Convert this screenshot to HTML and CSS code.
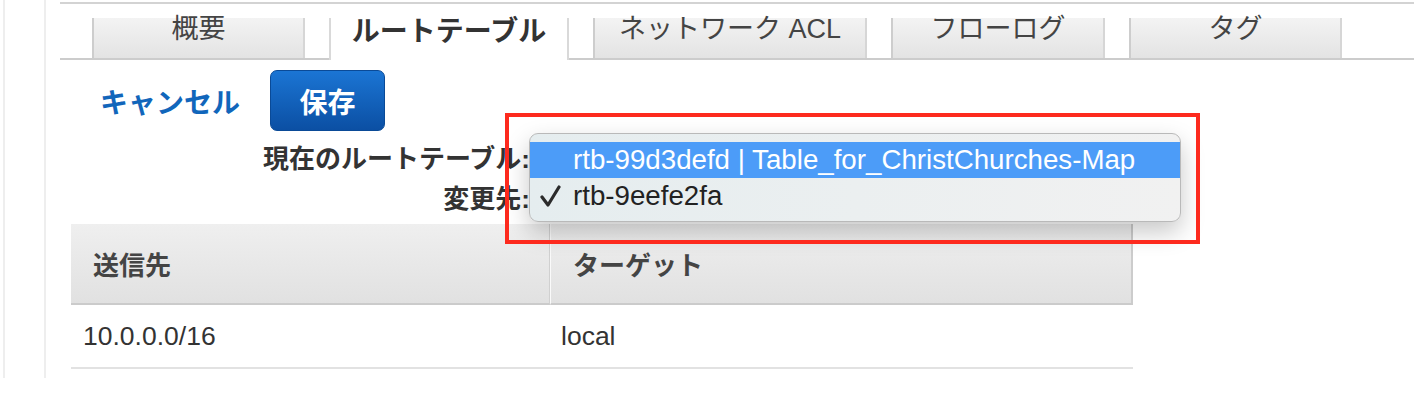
FILE: index.html
```html
<!DOCTYPE html>
<html lang="ja">
<head>
    <meta charset="UTF-8">
    <title>ルートテーブル</title>
    <link rel="stylesheet" href="styles.css">
</head>
<body>
    <div class="page">
        <div class="rail"></div>
        <div class="main">
            <div class="tabs">
                <div class="tab tab-1">概要</div>
                <div class="tab tab-2 active">ルートテーブル</div>
                <div class="tab tab-3">ネットワーク ACL</div>
                <div class="tab tab-4">フローログ</div>
                <div class="tab tab-5">タグ</div>
            </div>

            <div class="actions">
                <a class="link" href="#">キャンセル</a>
                <button class="btn-save">保存</button>
            </div>

            <div class="form">
                <div class="form-row"><label>現在のルートテーブル:</label></div>
                <div class="form-row"><label>変更先:</label></div>
            </div>

            <table class="routes">
                <thead>
                    <tr>
                        <th class="col-dest">送信先</th>
                        <th class="col-target">ターゲット</th>
                    </tr>
                </thead>
                <tbody>
                    <tr>
                        <td class="col-dest">10.0.0.0/16</td>
                        <td class="col-target">local</td>
                    </tr>
                </tbody>
            </table>

            <!-- open select menu -->
            <div class="menu">
                <div class="menu-item selected">rtb-99d3defd | Table_for_ChristChurches-Map</div>
                <div class="menu-item">
                    <svg class="check" width="22" height="24" viewBox="0 0 22 24">
                        <polyline points="2,13 8,21 19,3" fill="none" stroke="#2b2b2b" stroke-width="3.2" stroke-linecap="round" stroke-linejoin="round"/>
                    </svg>rtb-9eefe2fa
                </div>
            </div>

            <!-- annotation -->
            <div class="mark-box"></div>
        </div>
    </div>
</body>
</html>
```

FILE: styles.css
```css
body {
    margin: 0;
    font-family: 'Liberation Sans', 'Noto Sans CJK JP', sans-serif;
    background-color: #fff;
    color: #444;
}
.page {
    display: flex;
    height: 378px;
}
.rail {
    width: 39px;
    margin-left: 3px;
    border-left: 2px solid #eeeeee;
    border-right: 2px solid #eeeeee;
}
.main {
    flex: 1;
    position: relative;
    margin-left: 14px;
    margin-top: 2px;
    border-top: 2px solid #d3d3d3;
}

/* tabs */
.tabs {
    display: flex;
    gap: 24px;
    height: 40px;
    margin-top: 14px;
    padding-left: 32px;
    border-bottom: 2px solid #cccccc;
}
.tab {
    box-sizing: border-box;
    border-left: 2px solid #cdcdcd;
    border-right: 2px solid #d6d6d6;
    background: linear-gradient(#f3f3f3, #e3e3e3);
    text-align: center;
    font-size: 27px;
    line-height: 22px;
    color: #444;
}
.tab-1 { width: 213px; }
.tab-2 { width: 240px; }
.tab-3 { width: 274px; }
.tab-4 { width: 214px; }
.tab-5 { width: 213px; }
.tab.active {
    height: 42px;
    background: #fff;
    border-color: #d9d9d9;
    font-size: 28px;
    font-weight: bold;
    line-height: 28px;
    color: #333;
}

/* cancel / save */
.actions {
    display: flex;
    align-items: center;
    height: 61px;
    margin-top: 10px;
    padding-left: 40px;
}
.link {
    display: block;
    width: 170px;
    color: #1166bb;
    font-size: 28px;
    font-weight: bold;
    text-decoration: none;
}
.btn-save {
    width: 115px;
    height: 61px;
    border: 1px solid #0a4a97;
    border-radius: 7px;
    background: linear-gradient(#1b75d4, #0b4fa3);
    color: #fff;
    font-family: inherit;
    font-size: 28px;
    font-weight: bold;
    padding: 0;
}

/* form labels */
.form {
    margin-top: 5px;
}
.form-row {
    height: 40px;
    display: flex;
    align-items: center;
}
.form-row label {
    width: 470px;
    text-align: right;
    font-size: 26px;
    font-weight: bold;
    color: #333;
}

/* route table */
.routes {
    margin-top: 8px;
    margin-left: 11px;
    width: 1062px;
    border-collapse: separate;
    border-spacing: 0;
}
.routes th {
    height: 79px;
    padding: 0 0 0 22px;
    text-align: left;
    font-size: 26px;
    font-weight: bold;
    color: #444;
    background: linear-gradient(#efefef, #e1e1e1);
    border-bottom: 2px solid #cbcbcb;
}
.routes th.col-dest {
    width: 456px;
    border-right: 1px solid #d0d0d0;
}
.routes th.col-target {
    border-left: 1px solid #fafafa;
    border-right: 2px solid #cccccc;
}
.routes td {
    height: 60px;
    font-size: 26.5px;
    color: #333;
    border-bottom: 2px solid #e2e2e2;
}
.routes td.col-dest {
    padding-left: 12px;
}
.routes td.col-target {
    padding-left: 11px;
}

/* dropdown */
.menu {
    position: absolute;
    left: 469px;
    top: 129px;
    width: 652px;
    height: 89px;
    box-sizing: border-box;
    padding: 8px 0;
    border: 1px solid #b9b9b9;
    border-radius: 9px;
    background: linear-gradient(90deg, #e5edef, #f1f1f1);
    box-shadow: 0 10px 24px rgba(0,0,0,0.22);
}
.menu-item {
    height: 36px;
    line-height: 36px;
    padding-left: 43px;
    font-size: 27.7px;
    color: #222;
    white-space: nowrap;
}
.menu-item.selected {
    background-color: #4c9cf8;
    color: #fff;
}
.menu-item .check {
    margin-left: -33px;
    margin-right: 11px;
    vertical-align: -3px;
}
.mark-box {
    position: absolute;
    left: 445px;
    top: 109px;
    width: 695px;
    height: 131px;
    box-sizing: border-box;
    border: 4px solid #fd2a1e;
}
```
